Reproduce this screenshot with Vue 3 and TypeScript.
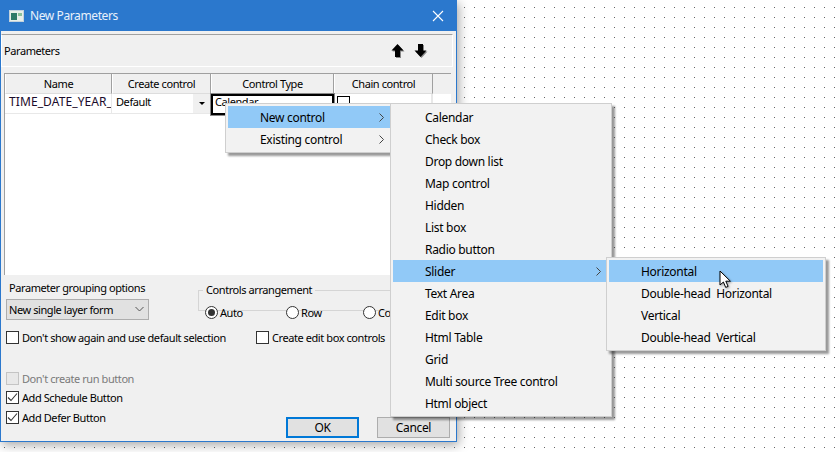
<script setup lang="ts">
const mainItems = ['Calendar','Check box','Drop down list','Map control','Hidden','List box','Radio button','Slider','Text Area','Edit box','Html Table','Grid','Multi source Tree control','Html object']
const subItems = ['Horizontal','Double-head\u00a0 Horizontal','Vertical','Double-head\u00a0 Vertical']
const columns = [
  { label: 'Name', width: 107 },
  { label: 'Create control', width: 99 },
  { label: 'Control Type', width: 123 },
  { label: 'Chain control', width: 99 },
]
</script>

<template>
  <div class="desk">
    <section class="dialog">
      <header class="title">
        <svg class="appicon" width="15" height="12" viewBox="0 0 15 12">
          <rect x="0.5" y="0.5" width="14" height="11" fill="#e8efe9" stroke="#c4d2dc"/>
          <rect x="2" y="3" width="6" height="7" fill="#2f7a68"/>
          <rect x="9" y="3" width="4" height="3" fill="#8cc09a"/>
        </svg>
        <span class="title-text">New Parameters</span>
        <svg class="close" width="12" height="12" viewBox="0 0 12 12"><path d="M1 1 11 11M11 1 1 11" stroke="#fff" stroke-width="1.1" fill="none"/></svg>
      </header>

      <div class="toolbar">
        <span>Parameters</span>
        <div class="arrows">
          <svg width="14" height="16" viewBox="0 0 14 16"><path d="M.5 7.500 6.500 1l6 6.500H9V14H4V7.500z" fill="#000" class="arrow"/></svg>
          <svg width="14" height="16" viewBox="0 0 14 16"><path d="M4 1h5v6.500h3.500l-6 6.500-6-6.500H4z" fill="#000" class="arrow"/></svg>
        </div>
      </div>

      <div class="table">
        <div class="thead">
          <div v-for="c in columns" :key="c.label" class="th" :style="{ width: c.width + 'px' }">{{ c.label }}</div>
        </div>
        <div class="tbody">
          <div class="row">
            <div class="td name">TIME_DATE_YEAR_</div>
            <div class="td create"><span>Default</span><i class="drop"><b></b></i></div>
            <div class="td type">Calendar</div>
            <div class="td chain"><i class="cellbox"></i></div>
          </div>
        </div>
      </div>

      <div class="options">
        <div class="group-row">
          <div class="grouping">
            <div class="g-label">Parameter grouping options</div>
            <div class="select">
              <span>New single layer form</span>
              <svg width="9" height="6" viewBox="0 0 9 6"><path d="M.5 1 4.500 5 8.500 1" stroke="#555" fill="none"/></svg>
            </div>
          </div>
          <fieldset class="arrange">
            <legend>Controls arrangement</legend>
            <label class="radio r1"><i class="dot on"></i>Auto</label>
            <label class="radio r2"><i class="dot"></i>Row</label>
            <label class="radio"><i class="dot"></i>Column</label>
          </fieldset>
        </div>
        <div class="check-row">
          <label class="check c1"><i class="box"></i>Don't show again and use default selection</label>
          <label class="check"><i class="box"></i>Create edit box controls</label>
        </div>
        <div class="stack-foot">
          <div class="stack">
            <label class="check off"><i class="box"></i>Don't create run button</label>
            <label class="check"><i class="box"><svg width="11" height="11" viewBox="0 0 11 11"><path d="M1 5.500 4 8.500 10 1.500" stroke="#333" stroke-width="1.1" fill="none"/></svg></i>Add Schedule Button</label>
            <label class="check"><i class="box"><svg width="11" height="11" viewBox="0 0 11 11"><path d="M1 5.500 4 8.500 10 1.500" stroke="#333" stroke-width="1.1" fill="none"/></svg></i>Add Defer Button</label>
          </div>
          <div class="buttons">
            <button class="btn primary">OK</button>
            <button class="btn">Cancel</button>
          </div>
        </div>
      </div>
    </section>

    <div class="menu m1">
      <div class="item active"><span>New control</span><svg class="chev" width="5" height="9" viewBox="0 0 5 9"><path d="M.5.5l4 4-4 4" stroke="#444" fill="none"/></svg></div>
      <div class="item"><span>Existing control</span><svg class="chev" width="5" height="9" viewBox="0 0 5 9"><path d="M.5.5l4 4-4 4" stroke="#444" fill="none"/></svg></div>
    </div>
    <div class="menu m2">
      <div v-for="m in mainItems" :key="m" class="item" :class="{ active: m === 'Slider' }">
        <span>{{ m }}</span>
        <svg v-if="m === 'Slider'" class="chev" width="5" height="9" viewBox="0 0 5 9"><path d="M.5.5l4 4-4 4" stroke="#444" fill="none"/></svg>
      </div>
    </div>
    <div class="menu m3">
      <div v-for="(m, i) in subItems" :key="m" class="item" :class="{ active: i === 0 }"><span>{{ m }}</span></div>
    </div>
    <svg class="cursor" width="14" height="20" viewBox="0 0 14 20">
      <path d="M1 1v14l3.400-3 2.300 5.400 2.400-1-2.300-5.200h4.600z" fill="#fff" stroke="#000" stroke-width="1" stroke-linejoin="round"/>
    </svg>
  </div>
</template>

<style>
html, body { margin: 0; background: #fff; }
</style>

<style scoped>
.desk {
  position: relative;
  width: 836px;
  height: 452px;
  overflow: hidden;
  background-color: #fff;
  background-image: radial-gradient(circle at 0.5px 0.5px, #666 0.7px, transparent 0.7px);
  background-size: 10px 10px;
  background-position: 4px 7px;
  font: 11px "Noto Sans", sans-serif;
  letter-spacing: -0.42px;
  color: #000;
}
.dialog {
  box-sizing: border-box;
  width: 457px;
  height: 442px;
  background: #f0f0f0;
  border: 1px solid #2b78cd;
  border-top: 0;
  box-shadow: 2px 3px 10px rgba(0,0,0,.35);
  display: flex;
  flex-direction: column;
}
.title {
  height: 31px;
  flex: none;
  background: #2b78cd;
  color: #fff;
  display: flex;
  align-items: center;
  padding: 0 12px 0 8px;
  font-size: 12px;
}
.appicon { margin-right: 6px; }
.title-text { flex: 1; letter-spacing: -0.4px; color: #e8f1fb; }
.toolbar {
  box-sizing: border-box;
  flex: none;
  height: 33px;
  margin: 3px 3px 0 0;
  border: 1px solid #fff;
  border-top-color: #a0a0a0;
  display: flex;
  align-items: center;
  justify-content: space-between;
  padding: 0 24px 0 2px;
}
.arrows { display: flex; gap: 9px; }
.arrow { filter: drop-shadow(1px 1px 0.5px #888); }
.table {
  flex: none;
  box-sizing: border-box;
  height: 202px;
  margin: 6px 5px 0 3px;
  background: #fff;
  border-left: 1px solid #a0a0a0;
  border-top: 1px solid #a0a0a0;
  display: flex;
  flex-direction: column;
}
.thead { display: flex; flex: none; height: 20px; background: #f0f0f0; }
.th {
  box-sizing: border-box;
  text-align: center;
  line-height: 19px;
  border-right: 1px solid #a0a0a0;
  border-left: 1px solid #fff;
  border-bottom: 1px solid #ddd;
}
.tbody { flex: 1; box-sizing: border-box; width: 428px; border-right: 1px solid #e8e8e8; }
.row { display: flex; height: 20px; position: relative; }
.td {
  box-sizing: border-box;
  flex: none;
  height: 20px;
  line-height: 16px;
  border-right: 1px solid #e8e8e8;
  border-bottom: 1px solid #e8e8e8;
  overflow: hidden;
  white-space: nowrap;
}
.name { width: 107px; padding-left: 4px; color: #1a0a2a; font-size: 12px; letter-spacing: 0.1px; }
.create { width: 99px; padding-left: 4px; display: flex; justify-content: space-between; }
.type {
  width: 123px;
  padding-left: 2px;
  border: 2px solid #000;
  outline: 1px solid #888;
  outline-offset: 0;
  height: 21px;
  line-height: 12px;
  font-size: 11px;
}
.chain { width: 98px; padding: 2px 0 0 3px; }
.drop {
  width: 17px;
  height: 19px;
  background: #f0f0f0;
  border-bottom: 1px solid #ccc;
  display: flex;
  align-items: center;
  justify-content: center;
}
.drop b { border: 3px solid transparent; border-top: 3px solid #000; border-bottom: 0; }
.cellbox { display: block; box-sizing: border-box; width: 13px; height: 13px; border: 1px solid #000; }

.options { flex: 1; display: flex; flex-direction: column; padding: 0 5px 0 5px; position: relative; }
.group-row { display: flex; flex: none; height: 54px; padding-top: 5px; box-sizing: border-box; }
.grouping { width: 192px; flex: none; }
.g-label { padding-left: 3px; line-height: 16px; }
.select {
  box-sizing: border-box;
  width: 143px;
  height: 21px;
  margin-top: 3px;
  background: #e1e1e1;
  border: 1px solid #adadad;
  display: flex;
  align-items: center;
  justify-content: space-between;
  padding: 0 4px 1px 2px;
}
.arrange {
  flex: none;
  margin: 3px 0 0 0;
  padding: 7px 0 0 6px;
  border: 1px solid #d5d5d5;
  width: 240px;
  height: 19px;
  box-sizing: content-box;
  display: flex;
  min-width: 0;
}
.arrange legend { padding: 0 3px; margin-left: -2px; line-height: 14px; }
.radio { display: flex; align-items: center; gap: 2px; height: 16px; }
.r1 { width: 81px; }
.r2 { width: 77px; }
.dot {
  box-sizing: border-box;
  flex: none;
  width: 13px;
  height: 13px;
  border: 1px solid #333;
  border-radius: 50%;
  background: #fff;
  display: flex;
  align-items: center;
  justify-content: center;
}
.dot.on::after { content: ""; width: 7px; height: 7px; border-radius: 50%; background: #333; }
.check { display: flex; align-items: center; gap: 3px; height: 16px; white-space: nowrap; }
.box {
  box-sizing: border-box;
  flex: none;
  width: 13px;
  height: 13px;
  border: 1px solid #333;
  background: #fff;
  display: flex;
  align-items: center;
  justify-content: center;
}
.check-row { display: flex; }
.c1 { width: 250px; }
.off { color: #7a7a7a; }
.off .box { border-color: #c4c4c4; background: #e8e8e8; }
.stack-foot { flex: 1; display: flex; justify-content: space-between; margin-top: 25px; }
.stack { display: flex; flex-direction: column; gap: 3px; }
.stack .check:last-child { margin-top: 1px; }
.buttons { display: flex; gap: 18px; align-self: flex-end; margin: 0 1px 3px 0; }
.btn {
  box-sizing: border-box;
  width: 73px;
  height: 21px;
  font: inherit;
  font-size: 12px;
  letter-spacing: -0.35px;
  background: #e1e1e1;
  border: 1px solid #adadad;
  padding: 0;
  color: #000;
}
.primary { border: 2px solid #0078d7; }

.menu {
  position: absolute;
  box-sizing: border-box;
  background: #f2f2f2;
  border: 1px solid #cfcfcf;
  padding: 2px;
  box-shadow: 3px 3px 2px rgba(0,0,0,.4);
  font-size: 12px;
  letter-spacing: -0.3px;
}
.m1 { left: 225px; top: 103px; width: 169px; height: 50px; }
.m2 { left: 390px; top: 103px; width: 222px; height: 314px; }
.m3 { left: 606px; top: 257px; width: 220px; height: 94px; }
.item {
  box-sizing: border-box;
  height: 22px;
  display: flex;
  align-items: center;
  justify-content: space-between;
  padding: 0 8px 0 32px;
  white-space: nowrap;
}
.m1 .item { width: 162px; padding-right: 6px; }
.active { background: #91c9f7; }
.cursor { position: absolute; left: 719px; top: 270px; filter: drop-shadow(1px 1px 1px rgba(0,0,0,.35)); }
</style>
